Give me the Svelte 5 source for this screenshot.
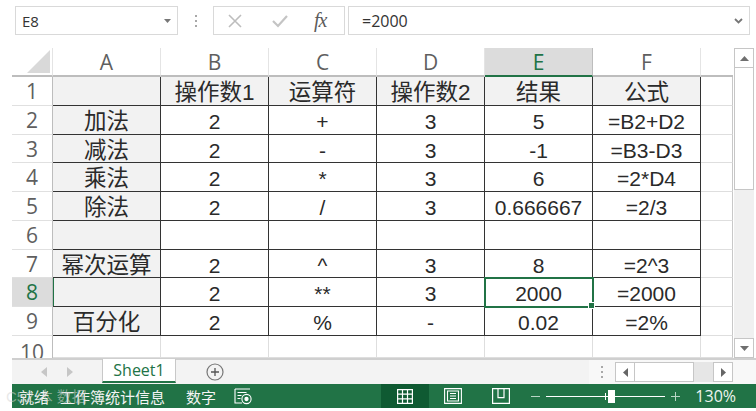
<script lang="ts">
const colWidths = [108, 108, 108, 108, 108, 108, 32];
const rowHeights = [29, 29, 28, 29, 29, 29, 28, 29, 29, 22];
const colNames = ['A', 'B', 'C', 'D', 'E', 'F'];

const rows = [
  ['', '操作数1', '运算符', '操作数2', '结果', '公式'],
  ['加法', '2', '+', '3', '5', '=B2+D2'],
  ['减法', '2', '-', '3', '-1', '=B3-D3'],
  ['乘法', '2', '*', '3', '6', '=2*D4'],
  ['除法', '2', '/', '3', '0.666667', '=2/3'],
  ['', '', '', '', '', ''],
  ['幂次运算', '2', '^', '3', '8', '=2^3'],
  ['', '2', '**', '3', '2000', '=2000'],
  ['百分化', '2', '%', '-', '0.02', '=2%']
];

const gridCols = `41px ${colWidths.join('px ')}px`;
const gridRows = `29px ${rowHeights.join('px ')}px`;

const isCjk = (text: string) => /[\u4e00-\u9fff]/.test(text);
</script>

<div class="window">
  <div class="formula-bar">
    <div class="name-box">
      <span>E8</span>
      <svg width="7" height="4" viewBox="0 0 7 4"><path d="M0 0h7L3.5 4z" fill="#777" /></svg>
    </div>
    <div class="grip"><i></i><i></i><i></i></div>
    <div class="fx-buttons">
      <svg class="cancel" width="14" height="14" viewBox="0 0 14 14"><path d="M1 1l12 12M13 1L1 13" stroke="#bdbdbd" stroke-width="1.6" fill="none" /></svg>
      <svg class="enter" width="16" height="14" viewBox="0 0 16 14"><path d="M1 7l5 5 9-10" stroke="#c4c4c4" stroke-width="2.2" fill="none" /></svg>
      <span class="fx">fx</span>
    </div>
    <div class="formula-input">
      <span>=2000</span>
      <svg width="9" height="6" viewBox="0 0 9 6"><path d="M1 1l3.5 3.5L8 1" stroke="#777" stroke-width="1.8" fill="none" /></svg>
    </div>
  </div>

  <div class="sheet-area">
    <div class="grid" style="grid-template-columns: {gridCols}; grid-template-rows: {gridRows};">
      <div class="corner"><div class="corner-mark"></div></div>
      {#each colNames as name}
        <div class="col-head" class:active={name === 'E'}>{name}</div>
      {/each}
      <div class="col-head blank"></div>

      {#each rows as row, r}
        <div class="row-head" class:active={r === 7}>{r + 1}</div>
        {#each row as text, c}
          <div
            class="cell boxed"
            class:cjk={isCjk(text)}
            class:shaded={r === 0 || c === 0}
            class:selected={r === 7 && c === 4}
            class:mark-left={r === 7 && c === 0}
          >
            {text}
            {#if r === 7 && c === 4}<span class="fill-handle"></span>{/if}
          </div>
        {/each}
        <div class="cell last"></div>
      {/each}

      <div class="row-head cut">10</div>
      {#each colWidths as _, i}
        <div class="cell" class:last={i === colWidths.length - 1}></div>
      {/each}
    </div>

    <div class="v-scroll">
      <div class="sb-btn"><svg width="9" height="5" viewBox="0 0 9 5"><path d="M4.5 0L9 5H0z" fill="#6f6f6f" /></svg></div>
      <div class="sb-thumb"></div>
      <div class="sb-track"></div>
      <div class="sb-btn"><svg width="9" height="5" viewBox="0 0 9 5"><path d="M0 0h9L4.5 5z" fill="#6f6f6f" /></svg></div>
    </div>
  </div>

  <div class="tab-bar">
    <div class="tab-nav">
      <svg width="6" height="10" viewBox="0 0 6 10"><path d="M6 0v10L0 5z" fill="#c6c6c6" /></svg>
      <svg width="6" height="10" viewBox="0 0 6 10"><path d="M0 0v10l6-5z" fill="#c6c6c6" /></svg>
    </div>
    <div class="tab">Sheet1</div>
    <div class="add-sheet">
      <svg width="18" height="18" viewBox="0 0 18 18"><circle cx="9" cy="9" r="8" fill="none" stroke="#777" stroke-width="1.2" /><path d="M9 5v8M5 9h8" stroke="#555" stroke-width="1.3" /></svg>
    </div>
    <div class="tab-spacer"></div>
    <div class="tab-right">
      <div class="h-grip"><i></i><i></i><i></i></div>
      <div class="h-scroll">
        <div class="h-btn"><svg width="5" height="9" viewBox="0 0 5 9"><path d="M5 0v9L0 4.5z" fill="#666" /></svg></div>
        <div class="h-thumb"></div>
        <div class="h-track"></div>
        <div class="h-btn"><svg width="5" height="9" viewBox="0 0 5 9"><path d="M0 0v9l5-4.5z" fill="#666" /></svg></div>
      </div>
    </div>
  </div>

  <div class="status-bar">
    <span class="status-text first">就绪</span>
    <span class="status-text stats">工作簿统计信息</span>
    <span class="status-text num">数字</span>
    <svg class="macro" width="19" height="17" viewBox="0 0 19 17" fill="none" stroke="#fff" stroke-width="1.1">
      <path d="M1 1h15M1 1v14h7M3.5 4.5h9M3.5 7.5h4M3.5 10.5h3" />
      <circle cx="12.5" cy="11" r="4.6" /><circle cx="12.5" cy="11" r="1.6" fill="#fff" />
    </svg>
    <span class="watermark">C52 本 数据</span>
    <div class="status-spacer"></div>
    <div class="view active">
      <svg width="16" height="15" viewBox="0 0 16 15" fill="none" stroke="#fff" stroke-width="1.2"><path d="M.6.6h14.8v13.8H.6zM5.5.6v13.8M10.5.6v13.8M.6 5.2h14.8M.6 9.8h14.8" /></svg>
    </div>
    <div class="view">
      <svg width="18" height="16" viewBox="0 0 18 16" fill="none" stroke="#fff" stroke-width="1.1"><path d="M.6.6h16.8v14.8H.6zM3.5 3h11v10h-11zM6 5.5h6M6 8h6M6 10.5h6" /></svg>
    </div>
    <div class="view">
      <svg width="18" height="16" viewBox="0 0 18 16" fill="none" stroke="#fff" stroke-width="1.2"><path d="M.6.6h16.8v14.8H.6zM6 .6v9h6V.6" /></svg>
    </div>
    <div class="zoom">
      <span class="zoom-sign"></span>
      <div class="slider"><span class="tick"></span><span class="knob"></span></div>
      <span class="zoom-sign plus"></span>
    </div>
    <span class="percent">130%</span>
  </div>
</div>

<style>
  :global(body) {
    margin: 0;
    background: #fff;
  }

  .window {
    width: 756px;
    height: 411px;
    overflow: hidden;
    display: flex;
    flex-direction: column;
    background: #fff;
    font-family: "Liberation Sans", "Noto Sans CJK SC", sans-serif;
    color: #222;
  }

  .formula-bar {
    height: 48px;
    box-sizing: border-box;
    padding: 6px 6px 13px 15px;
    display: flex;
    align-items: stretch;
    flex-shrink: 0;
  }

  .name-box {
    width: 163px;
    box-sizing: border-box;
    border: 1px solid #d9d9d9;
    display: flex;
    align-items: center;
    justify-content: space-between;
    padding: 0 6px 0 6px;
    font: 15px "Open Sans", sans-serif;
    color: #333;
  }

  .grip {
    width: 35px;
    display: flex;
    flex-direction: column;
    align-items: center;
    justify-content: center;
    gap: 3px;
  }

  .grip i,
  .h-grip i {
    width: 2px;
    height: 2px;
    background: #a8a8a8;
  }

  .fx-buttons {
    width: 132px;
    box-sizing: border-box;
    border: 1px solid #d9d9d9;
    display: flex;
    align-items: center;
    padding-left: 14px;
  }

  .enter {
    margin-left: 30px;
  }

  .fx {
    margin-left: 26px;
    font: italic 20px "Liberation Serif", serif;
    color: #5c5c5c;
    letter-spacing: -1px;
  }

  .formula-input {
    flex: 1;
    margin-left: 3px;
    box-sizing: border-box;
    border: 1px solid #d9d9d9;
    display: flex;
    align-items: center;
    justify-content: space-between;
    padding: 0 6px 0 13px;
    font: 16px "Open Sans", sans-serif;
    color: #333;
  }

  .sheet-area {
    height: 310px;
    margin-left: 12px;
    display: flex;
    flex-shrink: 0;
    overflow: hidden;
  }

  .grid {
    display: grid;
    width: 721px;
    flex-shrink: 0;
    align-content: start;
  }

  .corner {
    box-sizing: border-box;
    border-right: 1px solid #e4e4e4;
    border-bottom: 2px solid #bdbdbd;
    display: flex;
    align-items: flex-end;
    justify-content: flex-end;
    padding: 0 2px 2px 0;
  }

  .corner-mark {
    width: 0;
    height: 0;
    border-left: 23px solid transparent;
    border-bottom: 23px solid #d9d9d9;
  }

  .col-head {
    box-sizing: border-box;
    border-right: 1px solid #e4e4e4;
    border-bottom: 2px solid #bdbdbd;
    display: flex;
    align-items: center;
    justify-content: center;
    font: 21px "Open Sans", sans-serif;
    color: #5f5f5f;
  }

  .col-head.blank {
    border-right: none;
  }

  .col-head.active {
    background: #dcdcdc;
    color: #217346;
    border-bottom-color: #217346;
    border-right-color: #bdbdbd;
  }

  .row-head {
    box-sizing: border-box;
    border-right: 1px solid #bdbdbd;
    border-bottom: 1px solid #e0e0e0;
    display: flex;
    align-items: center;
    justify-content: center;
    font: 21px "Open Sans", sans-serif;
    color: #5f5f5f;
  }

  .row-head.active {
    background: #dcdcdc;
    color: #217346;
  }

  .row-head.cut {
    align-items: flex-start;
    border-bottom: none;
    padding-top: 2px;
    overflow: hidden;
  }

  .cell {
    position: relative;
    box-sizing: border-box;
    border-right: 1px solid #dedede;
    border-bottom: 1px solid #dedede;
    display: flex;
    align-items: center;
    justify-content: center;
    padding-top: 3px;
    font-size: 21px;
    line-height: 1;
    color: #2a2a2a;
    white-space: nowrap;
  }

  .cell.cjk {
    font-size: 22.5px;
    padding-top: 5px;
  }

  .cell.boxed {
    border-right-color: #333;
    border-bottom-color: #333;
  }

  .cell.last {
    border-right: 1px solid #c8c8c8;
  }

  .cell.shaded {
    background: #f2f2f2;
  }

  .cell.mark-left {
    box-shadow: inset 1px 0 0 #217346;
  }

  .cell.selected {
    outline: 2px solid #217346;
    outline-offset: -1px;
    z-index: 1;
  }

  .fill-handle {
    position: absolute;
    right: -3px;
    bottom: -3px;
    width: 5px;
    height: 5px;
    background: #217346;
    border: 1px solid #fff;
    box-sizing: content-box;
  }

  .v-scroll {
    width: 20px;
    margin-left: 1px;
    display: flex;
    flex-direction: column;
    box-sizing: border-box;
    background: #f0f0f0;
  }

  .sb-btn {
    height: 20px;
    flex-shrink: 0;
    box-sizing: border-box;
    border: 1px solid #c6c6c6;
    background: #fff;
    display: flex;
    align-items: center;
    justify-content: center;
  }

  .sb-thumb {
    height: 122px;
    flex-shrink: 0;
    box-sizing: border-box;
    background: #fff;
    border: 1px solid #c6c6c6;
    border-top: none;
  }

  .sb-track {
    flex: 1;
  }

  .tab-bar {
    height: 26px;
    margin-left: 12px;
    box-sizing: border-box;
    border-top: 2px solid #cfcfcf;
    background: #f3f3f3;
    display: flex;
    align-items: stretch;
    flex-shrink: 0;
  }

  .tab-nav {
    width: 90px;
    display: flex;
    align-items: center;
    justify-content: center;
    gap: 20px;
  }

  .tab {
    width: 74px;
    box-sizing: border-box;
    background: #fff;
    border: 1px solid #c8c8c8;
    border-top: none;
    border-bottom: 2px solid #217346;
    margin-bottom: 1px;
    margin-top: -1px;
    display: flex;
    align-items: center;
    justify-content: center;
    font: 16px "Open Sans", sans-serif;
    color: #217346;
  }

  .add-sheet {
    width: 78px;
    display: flex;
    align-items: center;
    justify-content: center;
  }

  .tab-spacer {
    flex: 1;
  }

  .tab-right {
    display: flex;
    align-items: stretch;
    background: #f8f8f8;
  }

  .h-grip {
    width: 26px;
    display: flex;
    flex-direction: column;
    align-items: center;
    justify-content: center;
    gap: 3px;
  }

  .h-scroll {
    width: 118px;
    margin: 2px 23px 2px 0;
    display: flex;
    background: #e6e6e6;
  }

  .h-btn {
    width: 20px;
    box-sizing: border-box;
    border: 1px solid #c6c6c6;
    background: #fff;
    display: flex;
    align-items: center;
    justify-content: center;
  }

  .h-thumb {
    width: 59px;
    box-sizing: border-box;
    background: #fff;
    border: 1px solid #c6c6c6;
    border-left: none;
  }

  .h-track {
    flex: 1;
  }

  .status-bar {
    position: relative;
    height: 24px;
    margin-left: 12px;
    background: #217346;
    display: flex;
    align-items: center;
    color: #fff;
    flex-shrink: 0;
  }

  .status-text {
    font-size: 15px;
    color: #f4f4f4;
  }

  .first {
    margin-left: 7px;
  }

  .stats {
    margin-left: 11px;
  }

  .num {
    margin-left: 21px;
  }

  .macro {
    margin-left: 18px;
  }

  .watermark {
    position: absolute;
    left: -6px;
    top: 1px;
    font-size: 15px;
    color: rgba(215, 215, 215, 0.55);
    white-space: nowrap;
  }

  .status-spacer {
    flex: 1;
  }

  .view {
    width: 48px;
    height: 100%;
    display: flex;
    align-items: center;
    justify-content: center;
  }

  .view.active {
    background: #0f5a32;
  }

  .zoom {
    display: flex;
    align-items: center;
    margin-left: 6px;
  }

  .zoom-sign {
    position: relative;
    width: 9px;
    height: 1px;
    background: #b9d5c5;
  }

  .zoom-sign.plus::after {
    content: "";
    position: absolute;
    left: 4px;
    top: -4px;
    width: 1px;
    height: 9px;
    background: #b9d5c5;
  }

  .slider {
    position: relative;
    width: 119px;
    height: 1px;
    margin: 0 6px;
    background: #fff;
  }

  .tick {
    position: absolute;
    left: 59px;
    top: -3px;
    width: 1px;
    height: 7px;
    background: #fff;
  }

  .knob {
    position: absolute;
    left: 62px;
    top: -6px;
    width: 7px;
    height: 13px;
    background: #fff;
  }

  .percent {
    margin: 0 20px 0 15px;
    font: 16px "Open Sans", sans-serif;
    color: #eef5f0;
  }
</style>
